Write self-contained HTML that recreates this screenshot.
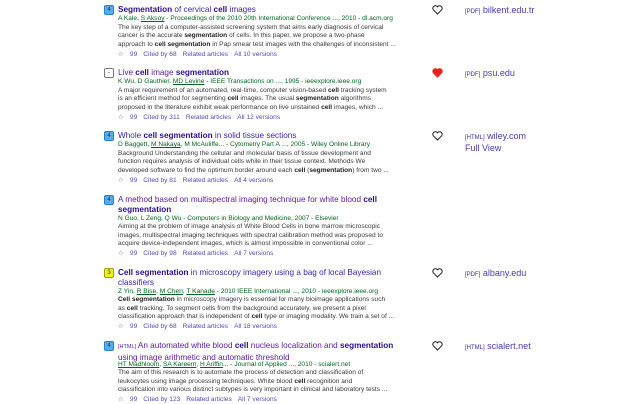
<!DOCTYPE html>
<html><head><meta charset="utf-8"><style>
body{margin:0;width:640px;height:400px;background:#fff;overflow:hidden;font-family:"Liberation Sans",Arial,sans-serif;position:relative}
.e{position:absolute;left:118px;white-space:nowrap}
.t{font-size:8.2px;line-height:9.5px;color:#3b1fa6;height:9.5px}
.t.two{height:19px}
.t.v{color:#5a1a9a}
.t b{color:#2a0d8a}
.a{font-size:6.6px;line-height:8.6px;color:#006621;margin-top:0.5px}
.a u{color:#006621}
.s{font-size:6.6px;line-height:8.6px;color:#3a3a3a}
.s b{color:#222}
.l{font-size:6.6px;line-height:9px;color:#5a48b0;margin-top:0.5px}
.l span{margin-right:6px}
.bd{position:absolute;left:104px;width:8px;height:8px;border-radius:2px;font-size:6px;line-height:8px;text-align:center;color:#333;background:#52aef0;border:0.5px solid #2a7fc0}
.hr{position:absolute;left:432px;width:11px;height:10px}
.r{position:absolute;left:465px;font-size:9px;line-height:10px;color:#4a3aa8;white-space:nowrap}
.r small{font-size:6px;color:#3a2a98}
</style></head><body>

<div class="bd" style="top:5px">4</div>
<div class="e" style="top:5px">
<div class="t"><b>Segmentation</b> of cervical <b>cell</b> images</div>
<div class="a">A Kale, <u>S Aksoy</u> - Proceedings of the 2010 20th International Conference ..., 2010 - dl.acm.org</div>
<div class="s">The key step of a computer-assisted screening system that aims early diagnosis of cervical<br>cancer is the accurate <b>segmentation</b> of cells. In this paper, we propose a two-phase<br>approach to <b>cell segmentation</b> in Pap smear test images with the challenges of inconsistent ...</div>
<div class="l"><span>☆</span><span>99</span><span>Cited by 68</span><span>Related articles</span><span>All 10 versions</span></div>
</div>

<div class="bd" style="top:68px;background:#fff;border:0.5px solid #777">-</div>
<div class="e" style="top:68px">
<div class="t v">Live <b>cell</b> image <b>segmentation</b></div>
<div class="a">K Wu, D Gauthier, <u>MD Levine</u> - IEEE Transactions on ..., 1995 - ieeexplore.ieee.org</div>
<div class="s">A major requirement of an automated, real-time, computer vision-based <b>cell</b> tracking system<br>is an efficient method for segmenting <b>cell</b> images. The usual <b>segmentation</b> algorithms<br>proposed in the literature exhibit weak performance on live unstained <b>cell</b> images, which ...</div>
<div class="l"><span>☆</span><span>99</span><span>Cited by 311</span><span>Related articles</span><span>All 12 versions</span></div>
</div>

<div class="bd" style="top:131px">4</div>
<div class="e" style="top:131px">
<div class="t">Whole <b>cell segmentation</b> in solid tissue sections</div>
<div class="a">D Baggett, <u>M Nakaya</u>, M McAuliffe... - Cytometry Part A ..., 2005 - Wiley Online Library</div>
<div class="s">Background Understanding the cellular and molecular basis of tissue development and<br>function requires analysis of individual cells while in their tissue context. Methods We<br>developed software to find the optimum border around each <b>cell</b> (<b>segmentation</b>) from two ...</div>
<div class="l"><span>☆</span><span>99</span><span>Cited by 81</span><span>Related articles</span><span>All 4 versions</span></div>
</div>

<div class="bd" style="top:195px">4</div>
<div class="e" style="top:195px">
<div class="t v two">A method based on multispectral imaging technique for white blood <b>cell</b><br><b>segmentation</b></div>
<div class="a">N Guo, L Zeng, Q Wu - Computers in Biology and Medicine, 2007 - Elsevier</div>
<div class="s">Aiming at the problem of image analysis of White Blood Cells in bone marrow microscopic<br>images, multispectral imaging techniques with spectral calibration method was proposed to<br>acquire device-independent images, which is almost impossible in conventional color ...</div>
<div class="l"><span>☆</span><span>99</span><span>Cited by 98</span><span>Related articles</span><span>All 7 versions</span></div>
</div>

<div class="bd" style="top:268px;background:#f0f020;border-color:#a0a000">3</div>
<div class="e" style="top:268px">
<div class="t two"><b>Cell segmentation</b> in microscopy imagery using a bag of local Bayesian<br>classifiers</div>
<div class="a">Z Yin, <u>R Bise</u>, <u>M Chen</u>, <u>T Kanade</u> - 2010 IEEE International ..., 2010 - ieeexplore.ieee.org</div>
<div class="s"><b>Cell segmentation</b> in microscopy imagery is essential for many bioimage applications such<br>as <b>cell</b> tracking. To segment cells from the background accurately, we present a pixel<br>classification approach that is independent of <b>cell</b> type or imaging modality. We train a set of ...</div>
<div class="l"><span>☆</span><span>99</span><span>Cited by 68</span><span>Related articles</span><span>All 18 versions</span></div>
</div>

<div class="bd" style="top:341px">4</div>
<div class="e" style="top:341px">
<div class="t v two"><small style="font-size:5.5px">[HTML]</small> An automated white blood <b>cell</b> nucleus localization and <b>segmentation</b><br>using image arithmetic and automatic threshold</div>
<div class="a"><u>HT Madhloom</u>, <u>SA Kareem</u>, <u>H Ariffin</u>... - Journal of Applied ..., 2010 - scialert.net</div>
<div class="s">The aim of this research is to automate the process of detection and classification of<br>leukocytes using image processing techniques. White blood <b>cell</b> recognition and<br>classification into various distinct subtypes is very important in clinical and laboratory tests ...</div>
<div class="l"><span>☆</span><span>99</span><span>Cited by 123</span><span>Related articles</span><span>All 7 versions</span></div>
</div>

<svg class="hr" style="top:5px" viewBox="0 0 11 10"><path d="M5.5 9 L1.3 4.8 A2.3 2.3 0 0 1 5.5 1.8 A2.3 2.3 0 0 1 9.7 4.8 Z" fill="none" stroke="#222" stroke-width="1"/></svg>
<svg class="hr" style="top:68px" viewBox="0 0 11 10"><path d="M5.5 9 L1.3 4.8 A2.3 2.3 0 0 1 5.5 1.8 A2.3 2.3 0 0 1 9.7 4.8 Z" fill="#e8231c" stroke="#e8231c" stroke-width="1"/></svg>
<svg class="hr" style="top:131px" viewBox="0 0 11 10"><path d="M5.5 9 L1.3 4.8 A2.3 2.3 0 0 1 5.5 1.8 A2.3 2.3 0 0 1 9.7 4.8 Z" fill="none" stroke="#222" stroke-width="1"/></svg>
<svg class="hr" style="top:268px" viewBox="0 0 11 10"><path d="M5.5 9 L1.3 4.8 A2.3 2.3 0 0 1 5.5 1.8 A2.3 2.3 0 0 1 9.7 4.8 Z" fill="none" stroke="#222" stroke-width="1"/></svg>
<svg class="hr" style="top:341px" viewBox="0 0 11 10"><path d="M5.5 9 L1.3 4.8 A2.3 2.3 0 0 1 5.5 1.8 A2.3 2.3 0 0 1 9.7 4.8 Z" fill="none" stroke="#222" stroke-width="1"/></svg>

<div class="r" style="top:5px"><small>[PDF]</small> bilkent.edu.tr</div>
<div class="r" style="top:68px"><small>[PDF]</small> psu.edu</div>
<div class="r" style="top:131px"><small>[HTML]</small> wiley.com<br>Full View</div>
<div class="r" style="top:268px"><small>[PDF]</small> albany.edu</div>
<div class="r" style="top:341px"><small>[HTML]</small> scialert.net</div>
</body></html>
